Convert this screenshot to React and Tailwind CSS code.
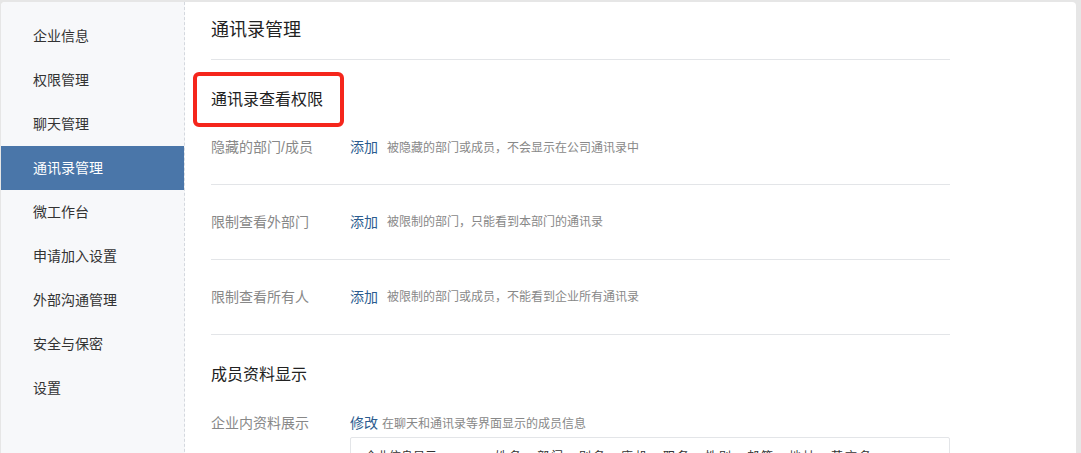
const menu = [
  "企业信息",
  "权限管理",
  "聊天管理",
  "通讯录管理",
  "微工作台",
  "申请加入设置",
  "外部沟通管理",
  "安全与保密",
  "设置",
];

const rows = [
  { label: "隐藏的部门/成员", desc: "被隐藏的部门或成员，不会显示在公司通讯录中" },
  { label: "限制查看外部门", desc: "被限制的部门，只能看到本部门的通讯录" },
  { label: "限制查看所有人", desc: "被限制的部门或成员，不能看到企业所有通讯录" },
];

export default function App() {
  return (
    <div
      className="w-[1081px] h-[453px] overflow-hidden bg-[#e6e6e6] pt-[2px] pl-[1px] pr-[5px]"
      style={{ fontFamily: '"Liberation Sans", "Noto Sans CJK SC", sans-serif' }}
    >
      <div className="flex h-[480px] bg-white rounded-tl-[4px] rounded-tr-[4px]">
        {/* Sidebar */}
        <div className="w-[184px] shrink-0 bg-[#f7f8fa] border-r border-dashed border-[#d4d8de] pt-[12px] rounded-tl-[4px]">
          {menu.map((item) => (
            <div
              key={item}
              className={
                item === "通讯录管理"
                  ? "h-[44px] flex items-center pl-[32px] text-[14px] bg-[#4a76a9] text-white"
                  : "h-[44px] flex items-center pl-[32px] text-[14px] text-[#333]"
              }
            >
              {item}
            </div>
          ))}
        </div>

        {/* Main */}
        <div className="flex-1 pl-[26px]">
          <div className="w-[739px]">
            <div className="h-[58px] flex items-center text-[18px] text-[#222] border-b border-[#e3e5e8] pb-[1px]">
              通讯录管理
            </div>

            <div className="pt-[12px] -ml-[18px]">
              <div className="w-[151px] h-[55px] border-[4px] border-[#f5261c] rounded-[6px] flex items-center pl-[14px] text-[16px] text-[#222]">
                通讯录查看权限
              </div>
            </div>

            {rows.map((r, i) => (
              <div
                key={r.label}
                className={
                  i === 0
                    ? "h-[58px] pt-[10px] border-b border-[#e3e5e8]"
                    : "h-[75px] flex items-center border-b border-[#e3e5e8]"
                }
              >
                <div className="flex items-center">
                  <div className="w-[139px] text-[14px] text-[#888]">{r.label}</div>
                  <span className="text-[14px] text-[#2b5c8f] mr-[9px]">添加</span>
                  <span className="text-[12px] text-[#888]">{r.desc}</span>
                </div>
              </div>
            ))}

            <div className="h-[80px] flex items-center text-[16px] text-[#222]">
              成员资料显示
            </div>

            <div className="flex -mt-[2px]">
              <div className="w-[139px] text-[14px] text-[#888]">企业内资料展示</div>
              <div className="flex-1">
                <div className="flex items-center">
                  <span className="text-[14px] text-[#2b5c8f] mr-[4px]">修改</span>
                  <span className="text-[12px] text-[#888]">在聊天和通讯录等界面显示的成员信息</span>
                </div>
                <div className="mt-[3px] border border-[#e3e5e8] rounded-[2px] h-[60px] pl-[14px] pt-[10px] flex text-[12px] text-[#333]">
                  <span className="w-[130px]">企业信息显示</span>
                  <span className="tracking-[2px]">姓名、部门、别名、座机、职务、性别、邮箱、地址、英文名</span>
                </div>
              </div>
            </div>
          </div>
        </div>
      </div>
    </div>
  );
}
